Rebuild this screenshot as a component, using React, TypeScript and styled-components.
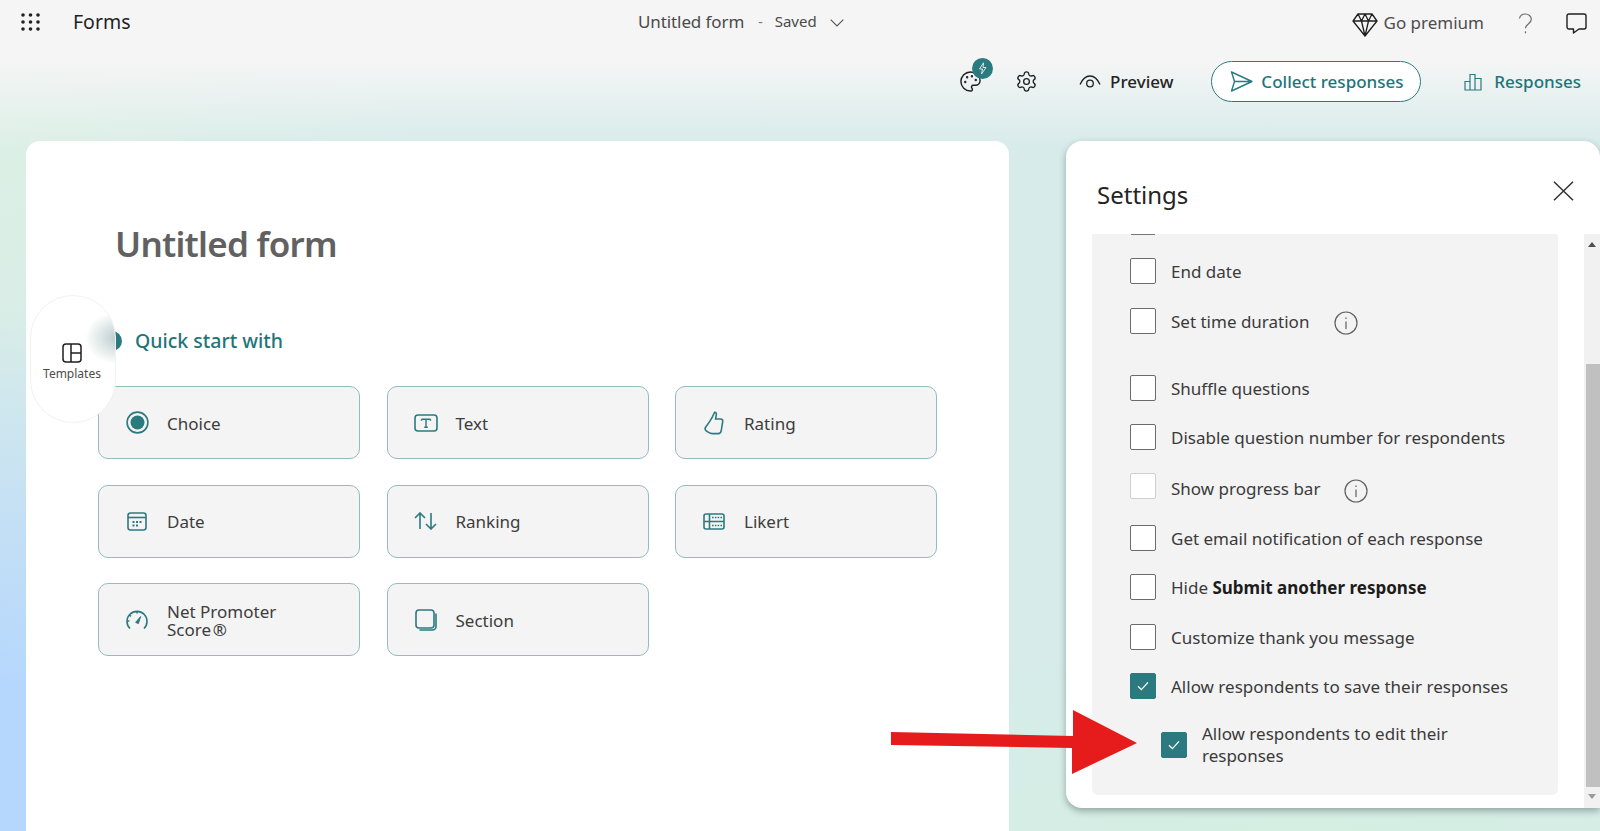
import React from "react";
import styled, { createGlobalStyle } from "styled-components";
import { Palette, Settings as Gear } from "lucide-react";

const Global = createGlobalStyle`
  html, body { margin: 0; padding: 0; }
  body { font-family: "Noto Sans", "Open Sans", sans-serif; color: #242424; }
  * { box-sizing: border-box; }
`;

const Page = styled.div`
  position: relative;
  width: 1600px;
  height: 831px;
  overflow: hidden;
  display: flex;
  flex-direction: column;
  background:
    linear-gradient(180deg, #f5f5f5 0, #f5f5f5 60px, rgba(245, 245, 245, 0) 150px),
    radial-gradient(ellipse 320px 480px at 0 790px, #b6d7fd 0, #b6d7fd 22%, rgba(182, 215, 253, 0) 100%),
    radial-gradient(ellipse 420px 320px at 0 170px, #dcefe5 0, rgba(220, 239, 229, 0) 100%),
    radial-gradient(ellipse 700px 200px at 1300px 840px, #d5efe2 0, rgba(213, 239, 226, 0) 100%),
    #d6ebea;
`;

const TopBar = styled.header`
  height: 46px;
  flex: none;
  display: flex;
  align-items: center;
  padding: 0 13px 0 21px;
`;
const Brand = styled.div`
  width: 617px;
  display: flex;
  align-items: center;
  gap: 33px;
  font-size: 19.5px;
  color: #1f1f1f;
`;
const BrandDots = styled.svg`
  margin-top: -2px;
`;
const BrandName = styled.span`
  margin-top: -4px;
`;
const TitleGroup = styled.div`
  display: flex;
  align-items: center;
  color: #4a4a4a;
`;
const TitleText = styled.span`
  margin-top: -4px;
  font-size: 17px;
  letter-spacing: -0.1px;
`;
const Dash = styled.span`
  margin: -4px 12px 0 14px;
  font-size: 14px;
  color: #777;
`;
const Saved = styled.span`
  margin: -4px 13px 0 0;
  font-size: 15px;
`;
const TopRight = styled.div`
  margin-left: auto;
  display: flex;
  align-items: center;
`;
const DiamondMark = styled.svg`
  margin-top: 4px;
`;
const Premium = styled.span`
  margin: -2px 34px 0 6px;
  font-size: 17px;
  color: #4d4d4d;
`;
const HelpMark = styled.svg`
  margin-right: 33px;
`;

const ActionBar = styled.div`
  height: 95px;
  flex: none;
  padding: 15px 19px 0 0;
  display: flex;
  justify-content: flex-end;
  align-items: flex-start;
`;
const ActionItem = styled.div<{ $mr: number }>`
  position: relative;
  display: flex;
  align-items: center;
  height: 41px;
  margin-right: ${(p) => p.$mr}px;
`;
const Badge = styled.span`
  position: absolute;
  left: 13px;
  top: -3px;
  width: 21px;
  height: 21px;
  border-radius: 50%;
  background: #2b7a7f;
  display: flex;
  align-items: center;
  justify-content: center;
`;
const PreviewLabel = styled.span`
  margin-left: 9px;
  font-size: 17px;
  font-weight: 500;
  color: #242424;
`;
const CollectButton = styled.button`
  width: 210px;
  height: 41px;
  margin-right: 43px;
  padding: 0 0 0 18px;
  display: flex;
  align-items: center;
  gap: 8px;
  background: #fff;
  border: 1px solid #2b7a7f;
  border-radius: 21px;
  font: 500 17px "Noto Sans", sans-serif;
  color: #1e7579;
`;
const ResponsesLabel = styled.span`
  margin-left: 12px;
  font-size: 17px;
  font-weight: 500;
  color: #1e7579;
`;

const Main = styled.main`
  flex: 1;
  display: flex;
  align-items: flex-start;
  padding-left: 26px;
  gap: 57px;
`;

const FormCard = styled.section`
  position: relative;
  width: 983px;
  height: 700px;
  flex: none;
  background: #fff;
  border-radius: 14px 14px 0 0;
  padding: 77px 0 0 72px;
`;
const FormTitle = styled.h1`
  margin: 0 0 0 17px;
  height: 52px;
  line-height: 52px;
  font-size: 35px;
  font-weight: 600;
  letter-spacing: -0.75px;
  color: #616161;
`;
const QuickRow = styled.div`
  margin: 56px 0 0 4px;
  height: 30px;
  display: flex;
  align-items: center;
  gap: 13px;
`;
const QuickDot = styled.span`
  width: 20px;
  height: 20px;
  border-radius: 50%;
  background: #2b7a7f;
`;
const QuickLabel = styled.span`
  margin-top: -2px;
  font-size: 19.5px;
  font-weight: 500;
  color: #1e7579;
`;
const TileGrid = styled.div`
  margin-top: 30px;
  display: grid;
  grid-template-columns: repeat(3, 262px);
  grid-auto-rows: 73px;
  gap: 25.5px 26.5px;
`;
const Tile = styled.div`
  display: flex;
  align-items: center;
  padding-left: 16px;
  background: #f4f4f4;
  border: 1px solid #93bcbf;
  border-radius: 10px;
  font-size: 17px;
  line-height: 18px;
  color: #3d3d3d;
`;
const TileIcon = styled.span`
  width: 44px;
  margin-right: 8px;
  display: flex;
  justify-content: center;
  flex: none;
`;
const TileLabel = styled.span`
  margin-top: 2px;
`;
const TemplatesPill = styled.div`
  position: absolute;
  left: 4px;
  top: 154px;
  width: 86px;
  height: 128px;
  border-radius: 43px;
  border: 1px solid #f0f2f2;
  background:
    radial-gradient(ellipse 32px 26px at 86px 42px, rgba(95, 135, 138, 0.42) 0, rgba(95, 135, 138, 0) 100%),
    #fff;
  display: flex;
  flex-direction: column;
  align-items: center;
  padding: 47px 2px 0 0;
`;
const PillLabel = styled.span`
  margin-top: 2px;
  font-size: 12px;
  line-height: 18px;
  color: #4d4d4d;
`;

const SettingsCard = styled.aside`
  position: relative;
  flex: 1;
  height: 667px;
  overflow: hidden;
  background: #fff;
  border-radius: 16px 16px 0 16px;
  box-shadow: 0 3px 7px rgba(60, 80, 80, 0.45);
`;
const SettingsHeader = styled.div`
  height: 93px;
  padding: 0 26px 0 31px;
  display: flex;
  align-items: center;
  justify-content: space-between;
  font-size: 24px;
  color: #242424;
`;
const SettingsTitle = styled.span`
  margin-top: 14px;
`;
const CloseMark = styled.svg`
  margin-top: 6px;
`;
const SettingsBody = styled.div`
  display: flex;
  align-items: flex-start;
  padding-left: 26px;
`;
const Panel = styled.div`
  width: 466px;
  height: 561px;
  padding-left: 38px;
  background: #f3f3f3;
  border-radius: 0 0 6px 6px;
  font-size: 17px;
  color: #3a3a3a;
`;
const PeekEdge = styled.div`
  width: 24px;
  height: 1px;
  margin-left: 1px;
  background: #777;
`;
const Row = styled.div<{ $top: number; $indent?: number }>`
  display: flex;
  align-items: center;
  min-height: 26px;
  margin-top: ${(p) => p.$top}px;
  margin-left: ${(p) => p.$indent ?? 0}px;
  gap: 15px;
`;
const Box = styled.span<{ $state?: "on" | "off" | "dim" }>`
  flex: none;
  width: 26px;
  height: 26px;
  border-radius: 2px;
  display: flex;
  align-items: center;
  justify-content: center;
  background: ${(p) => (p.$state === "on" ? "#2b7a7f" : "#fff")};
  border: 1px solid
    ${(p) => (p.$state === "on" ? "#2b7a7f" : p.$state === "dim" ? "#cfcfcf" : "#6b6b6b")};
`;
const RowText = styled.span<{ $width?: number; $drop?: number }>`
  line-height: 22px;
  transform: translateY(${(p) => p.$drop ?? 1}px);
  ${(p) => (p.$width ? `width: ${p.$width}px;` : "")}
  b { font-weight: 700; color: #1c1c1c; }
`;
const InfoMark = styled.svg<{ $left: number; $drop: number }>`
  margin-left: ${(p) => p.$left}px;
  transform: translateY(${(p) => p.$drop}px);
`;
const ScrollTrack = styled.div`
  width: 16px;
  height: 574px;
  margin-left: 26px;
  background: #f1f1f1;
  display: flex;
  flex-direction: column;
  align-items: center;
`;
const ArrowUp = styled.span`
  margin-top: 8px;
  width: 0;
  height: 0;
  border: 4px solid transparent;
  border-top: 0;
  border-bottom: 5px solid #505050;
`;
const Thumb = styled.div`
  width: 14px;
  height: 423px;
  margin-top: 117px;
  margin-left: 2px;
  background: #c0c0c0;
`;
const ArrowDown = styled.span`
  margin-top: 7px;
  width: 0;
  height: 0;
  border: 4px solid transparent;
  border-bottom: 0;
  border-top: 5px solid #9a9a9a;
`;
const RedArrow = styled.svg`
  position: absolute;
  left: 891px;
  top: 710px;
`;

const teal = "#2b7a7f";
const stroke = { fill: "none", stroke: teal, strokeWidth: 1.6 } as const;

const icons: Record<string, React.ReactNode> = {
  choice: (
    <svg width="23" height="23" viewBox="0 0 23 23">
      <circle cx="11.5" cy="11.5" r="10.4" {...stroke} />
      <circle cx="11.5" cy="11.5" r="7" fill={teal} />
    </svg>
  ),
  text: (
    <svg width="24" height="18" viewBox="0 0 24 18">
      <rect x="1" y="1" width="22" height="16" rx="3" {...stroke} />
      <path d="M7.5 5.2h9M12 5.2v8M10.2 13.2h3.6M7.5 5.2v1.6M16.5 5.2v1.6" {...stroke} strokeWidth="1.4" />
    </svg>
  ),
  rating: (
    <svg width="20" height="24" viewBox="0 0 20 24">
      <path
        d="M10.6 1.2c1.6 0 2 1.4 1.6 3.2L11.6 8h5c1.5 0 2.4 1.2 2.1 2.6l-1.5 9.2c-.3 1.6-1.4 2.8-3 2.8H8.5c-1.5 0-3-.5-4.3-1.4l-1.9-1.4C1 18.8.8 17.4 1.6 16.2l4-5.6c1.8-2.6 3.4-5.600 5-9.400z"
        {...stroke}
      />
    </svg>
  ),
  date: (
    <svg width="20" height="19" viewBox="0 0 20 19">
      <rect x="1" y="1" width="18" height="17" rx="2.5" {...stroke} />
      <path d="M1 5.5h18" {...stroke} />
      <path d="M5.5 9h2v2h-2zM9 9h2v2H9zM12.5 9h2v2h-2zM5.5 12.6h2v2h-2zM9 12.6h2v2H9z" fill={teal} />
    </svg>
  ),
  ranking: (
    <svg width="23" height="18" viewBox="0 0 23 18">
      <path d="M6 17V1M1 6l5-5 5 5M17 1v16M12 12l5 5 5-5" {...stroke} />
    </svg>
  ),
  likert: (
    <svg width="22" height="17" viewBox="0 0 22 17">
      <rect x="1" y="1" width="20" height="15" rx="2" {...stroke} />
      <path d="M1 8.5h20M6.5 1v15" {...stroke} />
      <path d="M9 4.5h10M9 12.5h10" {...stroke} strokeDasharray="1.6 1.2" />
    </svg>
  ),
  nps: (
    <svg width="22" height="20" viewBox="0 0 22 20">
      <path d="M4 18.5A10 10 0 1 1 18 18.5" {...stroke} />
      <path d="M9.6 12.4L14.6 6.6 12.4 13.6z" fill={teal} stroke={teal} strokeWidth="1" />
      <path d="M11 1v2.4M3.4 5l1.6 1.4M1 11h2.4" {...stroke} />
    </svg>
  ),
  section: (
    <svg width="22" height="22" viewBox="0 0 22 22">
      <rect x="1" y="1" width="18" height="18" rx="3" {...stroke} />
      <path d="M21 4.5v13a3.5 3.5 0 0 1-3.5 3.5H4.5" {...stroke} />
    </svg>
  ),
};

const tiles: { icon: string; label: React.ReactNode }[] = [
  { icon: "choice", label: "Choice" },
  { icon: "text", label: "Text" },
  { icon: "rating", label: "Rating" },
  { icon: "date", label: "Date" },
  { icon: "ranking", label: "Ranking" },
  { icon: "likert", label: "Likert" },
  { icon: "nps", label: <>Net Promoter<br />Score{"\u200a"}®</> },
  { icon: "section", label: "Section" },
];

const Check = () => (
  <svg width="12" height="10" viewBox="0 0 12 10">
    <path d="M1 5.2l3.4 3.4L11 1.4" fill="none" stroke="#fff" strokeWidth="1.3" />
  </svg>
);

const Info = ({ left, drop }: { left: number; drop: number }) => (
  <InfoMark $left={left} $drop={drop} width="24" height="24" viewBox="0 0 24 24">
    <circle cx="12" cy="12" r="11" fill="none" stroke="#5f5f5f" strokeWidth="1.2" />
    <path d="M12 10.5v7.5M12 6.5v1.6" fill="none" stroke="#5f5f5f" strokeWidth="1.2" />
  </InfoMark>
);

export default function App() {
  return (
    <Page>
      <Global />
      <TopBar>
        <Brand>
          <BrandDots width="19" height="18" viewBox="0 0 19 18" fill="#222">
            {[2, 9, 16].flatMap((y) =>
              [2, 9.5, 17].map((x) => <circle key={`${x}-${y}`} cx={x} cy={y} r="1.8" />)
            )}
          </BrandDots>
          <BrandName>Forms</BrandName>
        </Brand>
        <TitleGroup>
          <TitleText>Untitled form</TitleText>
          <Dash>-</Dash>
          <Saved>Saved</Saved>
          <svg width="14" height="8" viewBox="0 0 14 8">
            <path d="M.7.7L7 7l6.3-6.3" fill="none" stroke="#555" strokeWidth="1.1" />
          </svg>
        </TitleGroup>
        <TopRight>
          <DiamondMark width="26" height="24" viewBox="0 0 26 24" fill="none" stroke="#1f1f1f" strokeWidth="1.3" strokeLinejoin="round">
            <path d="M6 1h14l5 7-12 15L1 8zM1 8h24M6 1l3.500 7L13 23l3.500-15L20 1M9.500 8L13 1l3.500 7" />
          </DiamondMark>
          <Premium>Go premium</Premium>
          <HelpMark width="15" height="21" viewBox="0 0 15 21" fill="none" stroke="#6a6a6a" strokeWidth="1.2">
            <path d="M1.500 5.500C2 2.800 4.400 1 7.300 1c3.300 0 6 2.200 6 5.200 0 2.300-1.300 3.400-3 4.700-1.800 1.300-2.800 2.300-2.800 4.400" />
            <path d="M7.500 18.300v2" />
          </HelpMark>
          <svg width="21" height="21" viewBox="0 0 21 21" fill="none" stroke="#1f1f1f" strokeWidth="1.4" strokeLinejoin="round">
            <path d="M3 1h15a2 2 0 0 1 2 2v11a2 2 0 0 1-2 2h-5l-5.500 4v-4H3a2 2 0 0 1-2-2V3a2 2 0 0 1 2-2z" />
          </svg>
        </TopRight>
      </TopBar>

      <ActionBar>
        <ActionItem $mr={33}>
          <Palette size={23} strokeWidth={1.5} color="#1f1f1f" />
          <Badge>
            <svg width="9" height="13" viewBox="0 0 9 13" fill="none" stroke="#d7e8e8" strokeWidth="1">
              <path d="M5.500.8L1.500 7h3L3.500 12 8 5.500H5z" />
            </svg>
          </Badge>
        </ActionItem>
        <ActionItem $mr={41}>
          <Gear size={23} strokeWidth={1.4} color="#1f1f1f" />
        </ActionItem>
        <ActionItem $mr={38}>
          <svg width="22" height="13" viewBox="0 0 22 13" fill="none" stroke="#1f1f1f" strokeWidth="1.300">
            <path d="M1 9.500C3.500 4 7 1 11 1s7.500 3 10 8.500" />
            <circle cx="11" cy="8.500" r="3.300" />
          </svg>
          <PreviewLabel>Preview</PreviewLabel>
        </ActionItem>
        <CollectButton type="button">
          <svg width="23" height="21" viewBox="0 0 23 21" fill="none" stroke={teal} strokeWidth="1.400" strokeLinejoin="round">
            <path d="M1.500 1L22 10.500 1.500 20l3-9.500zM4.500 10.500H22" />
          </svg>
          Collect responses
        </CollectButton>
        <ActionItem $mr={0}>
          <svg width="18" height="18" viewBox="0 0 18 18" fill="none" stroke={teal} strokeWidth="1.200">
            <path d="M1 17V8.500h5V17M6 17V1.500h5V17M11 17V5.500h6V17M.5 17h17" />
          </svg>
          <ResponsesLabel>Responses</ResponsesLabel>
        </ActionItem>
      </ActionBar>

      <Main>
        <FormCard>
          <FormTitle>Untitled form</FormTitle>
          <QuickRow>
            <QuickDot />
            <QuickLabel>Quick start with</QuickLabel>
          </QuickRow>
          <TileGrid>
            {tiles.map((t) => (
              <Tile key={t.icon}>
                <TileIcon>{icons[t.icon]}</TileIcon>
                <TileLabel>{t.label}</TileLabel>
              </Tile>
            ))}
          </TileGrid>
          <TemplatesPill>
            <svg width="20" height="20" viewBox="0 0 20 20" fill="none" stroke="#1f1f1f" strokeWidth="1.500">
              <rect x="1" y="1" width="18" height="18" rx="3" />
              <path d="M9 1v18M9 10h10" />
            </svg>
            <PillLabel>Templates</PillLabel>
          </TemplatesPill>
        </FormCard>

        <SettingsCard>
          <SettingsHeader>
            <SettingsTitle>Settings</SettingsTitle>
            <CloseMark width="21" height="20" viewBox="0 0 21 20" fill="none" stroke="#333" strokeWidth="1.500">
              <path d="M1 .7l19 18.600M20 .7L1 19.300" />
            </CloseMark>
          </SettingsHeader>
          <SettingsBody>
            <Panel>
              <PeekEdge />
              <Row $top={23}><Box /><RowText>End date</RowText></Row>
              <Row $top={24}><Box /><RowText>Set time duration</RowText><Info left={10} drop={2} /></Row>
              <Row $top={41}><Box /><RowText>Shuffle questions</RowText></Row>
              <Row $top={23}><Box /><RowText>Disable question number for respondents</RowText></Row>
              <Row $top={23}><Box $state="dim" /><RowText $drop={3}>Show progress bar</RowText><Info left={9} drop={5} /></Row>
              <Row $top={26}><Box /><RowText>Get email notification of each response</RowText></Row>
              <Row $top={23}><Box /><RowText>Hide <b>Submit another response</b></RowText></Row>
              <Row $top={24}><Box /><RowText>Customize thank you message</RowText></Row>
              <Row $top={23}><Box $state="on"><Check /></Box><RowText>Allow respondents to save their responses</RowText></Row>
              <Row $top={24} $indent={31}><Box $state="on"><Check /></Box><RowText $drop={0} $width={300}>Allow respondents to edit their responses</RowText></Row>
            </Panel>
            <ScrollTrack>
              <ArrowUp />
              <Thumb />
              <ArrowDown />
            </ScrollTrack>
          </SettingsBody>
        </SettingsCard>
      </Main>

      <RedArrow width="246" height="64" viewBox="0 0 246 64">
        <path d="M0 22L182 26V0L246 33 181 64V38L0 35z" fill="#e61c1c" />
      </RedArrow>
    </Page>
  );
}
